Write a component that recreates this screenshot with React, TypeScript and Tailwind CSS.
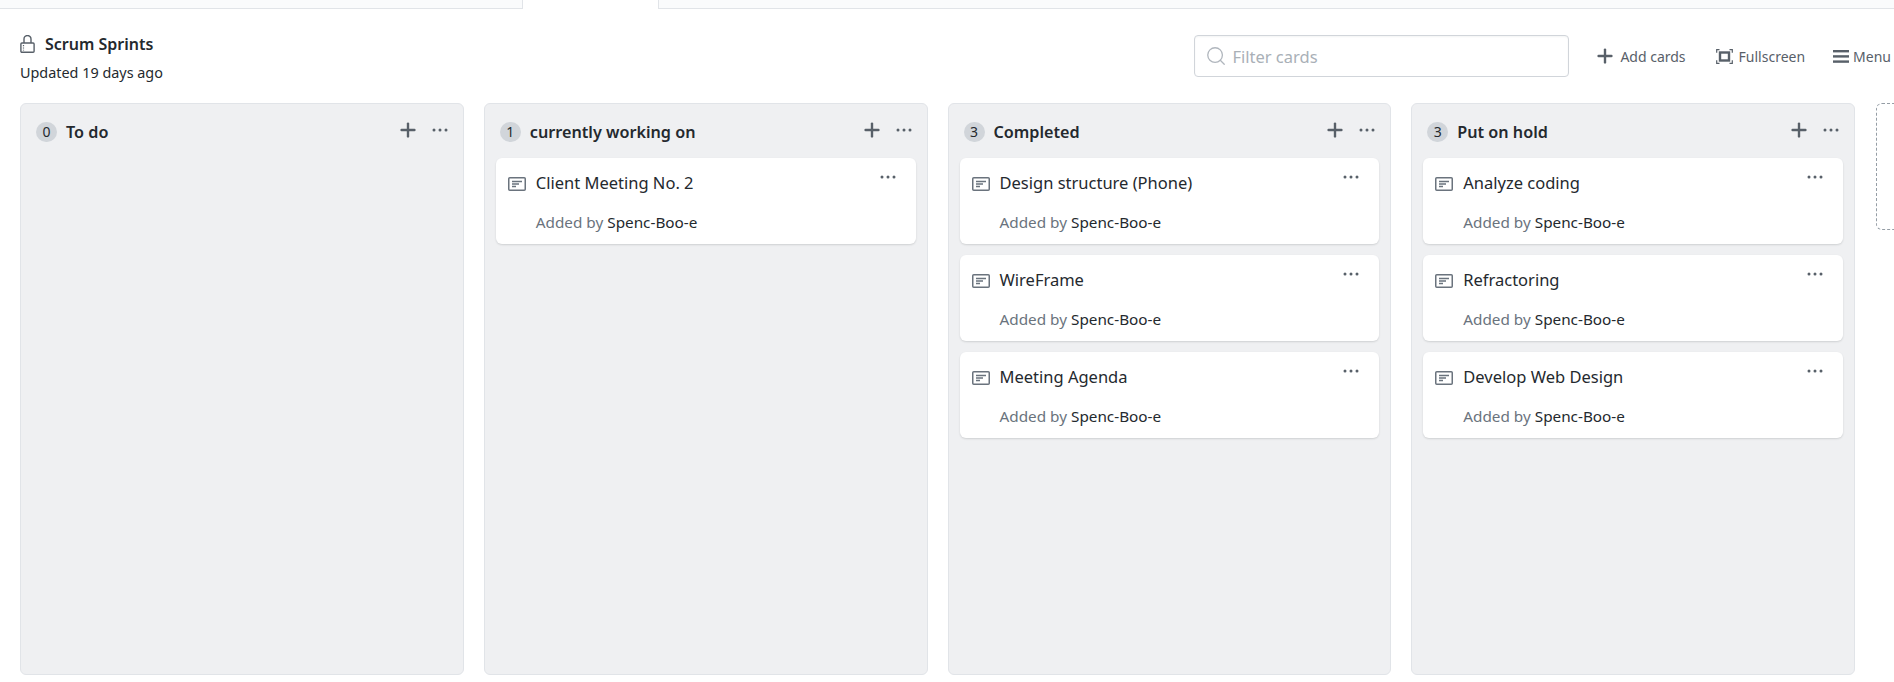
import { Plus, Search } from 'lucide-react'

const COLUMNS = [
  { name: 'To do', cards: [] as string[] },
  { name: 'currently working on', cards: ['Client Meeting No. 2'] },
  { name: 'Completed', cards: ['Design structure (Phone)', 'WireFrame', 'Meeting Agenda'] },
  { name: 'Put on hold', cards: ['Analyze coding', 'Refractoring', 'Develop Web Design'] },
]

function Dots({ className }: { className?: string }) {
  return (
    <svg width="16" height="4" viewBox="0 0 16 4" fill="#586069" className={className}>
      <circle cx="2" cy="2" r="1.5" />
      <circle cx="8" cy="2" r="1.5" />
      <circle cx="14" cy="2" r="1.5" />
    </svg>
  )
}

function NoteIcon() {
  return (
    <svg width="18" height="14" viewBox="0 0 18 14" fill="none" stroke="#6a737d" className="shrink-0">
      <rect x="0.75" y="0.75" width="16.5" height="12.5" rx="1" strokeWidth="1.5" />
      <path d="M4 4.5h10M4 7h7M4 9.5h4" strokeWidth="1.3" />
    </svg>
  )
}

function LockIcon() {
  return (
    <svg width="15" height="18" viewBox="0 0 15 18" fill="none" stroke="#586069" strokeWidth="1.4" className="shrink-0">
      <path d="M4 8V4a3.5 3.5 0 0 1 7 0v4" />
      <rect x="0.9" y="8" width="13.2" height="9.3" rx="1" />
      <path d="M3.5 10v5.5" strokeWidth="1.2" strokeDasharray="1.2 1.2" />
    </svg>
  )
}

function FullscreenIcon() {
  return (
    <svg width="17" height="15" viewBox="0 0 17 15" fill="none" stroke="#586069" className="shrink-0">
      <path d="M3.5 0.7H0.7v3M13.5 0.7h2.8v3M3.5 14.3H0.7v-3M13.5 14.3h2.8v-3" strokeWidth="1.2" />
      <rect x="4" y="3.5" width="9" height="8" strokeWidth="2.4" />
    </svg>
  )
}

function MenuIcon() {
  return (
    <svg width="16" height="13" viewBox="0 0 16 13" fill="#586069" className="shrink-0">
      <rect y="0" width="16" height="2.4" />
      <rect y="5.2" width="16" height="2.4" />
      <rect y="10.4" width="16" height="2.4" />
    </svg>
  )
}

function Card({ title }: { title: string }) {
  return (
    <div className="h-[86px] rounded-md bg-white pl-3 pr-[20px] pt-[12px] shadow-[0_1px_2px_rgba(27,31,35,0.15)]">
      <div className="flex items-start">
        <div className="mt-[7px]"><NoteIcon /></div>
        <span className="ml-[10px] flex-1 text-[16.5px] leading-[26px] text-[#24292e]">{title}</span>
        <Dots className="mt-[5px]" />
      </div>
      <p className="ml-[28px] mt-[15px] text-[15.3px] leading-[22px] text-[#6a737d]">
        Added by <span className="text-[#24292e]">Spenc-Boo-e</span>
      </p>
    </div>
  )
}

function Column({ name, cards }: { name: string; cards: string[] }) {
  return (
    <div className="flex-1 rounded-md border border-[#e1e4e8] bg-[#eff0f2] px-[11px]">
      <div className="flex h-[54px] items-center pl-[4px] pr-[4px]">
        <span className="mt-[1px] flex h-5 w-[21px] items-center justify-center rounded-full bg-[#d1d5da] text-[14px] text-[#24292e]">
          {cards.length}
        </span>
        <h3 className="ml-[9px] mt-[2px] flex-1 text-[16.2px] font-semibold text-[#24292e]">{name}</h3>
        <Plus size={22} strokeWidth={2.6} className="mb-[2px] text-[#586069]" />
        <Dots className="mb-[2px] ml-[13px]" />
      </div>
      <div className="flex flex-col gap-[11px]">
        {cards.map(card => (
          <Card key={card} title={card} />
        ))}
      </div>
    </div>
  )
}

export default function App() {
  return (
    <div className="flex h-[682px] w-[1894px] flex-col overflow-hidden bg-white font-['Noto_Sans',sans-serif]">
      {/* Tab strip */}
      <div className="flex h-[9px] shrink-0">
        <div className="w-[523px] border-b border-r border-[#e1e4e8] bg-[#fafbfc]" />
        <div className="w-[135px]" />
        <div className="flex-1 border-b border-l border-[#e1e4e8] bg-[#fafbfc]" />
      </div>

      {/* Project header */}
      <div className="flex h-[94px] shrink-0 items-start pl-5 pr-[3px]">
        <div className="flex-1 pt-[24px]">
          <div className="flex items-center gap-[10px]">
            <LockIcon />
            <h2 className="text-[16px] font-semibold leading-[22px] text-[#24292e]">Scrum Sprints</h2>
          </div>
          <p className="mt-[8px] text-[14.4px] leading-[20px] text-[#24292e]">Updated 19 days ago</p>
        </div>
        <div className="mt-[26px] flex h-[42px] w-[375px] items-center rounded border border-[#d1d5da] bg-white pl-[10px] shadow-[inset_0_1px_2px_rgba(27,31,35,0.05)]">
          <Search size={22} strokeWidth={1.4} className="text-[#b0b6bd]" />
          <span className="ml-[5px] mt-[2px] text-[16.5px] text-[#a9b0b7]">Filter cards</span>
        </div>
        <div className="mt-[26px] flex h-[42px] items-center text-[14px] text-[#586069]">
          <div className="ml-[25px] flex items-center gap-1">
            <Plus size={22} strokeWidth={2.6} />
            <span>Add cards</span>
          </div>
          <div className="ml-[30px] flex items-center gap-[6px]">
            <FullscreenIcon />
            <span>Fullscreen</span>
          </div>
          <div className="ml-[28px] flex items-center gap-1">
            <MenuIcon />
            <span>Menu</span>
          </div>
        </div>
      </div>

      {/* Board */}
      <div className="flex h-[572px] shrink-0 pl-5">
        <div className="flex w-[1835px] shrink-0 gap-5">
          {COLUMNS.map(col => (
            <Column key={col.name} name={col.name} cards={col.cards} />
          ))}
        </div>
        <div className="ml-[21px] h-[127px] w-[60px] shrink-0 rounded-md border border-dashed border-[#959da5]" />
      </div>
    </div>
  )
}
